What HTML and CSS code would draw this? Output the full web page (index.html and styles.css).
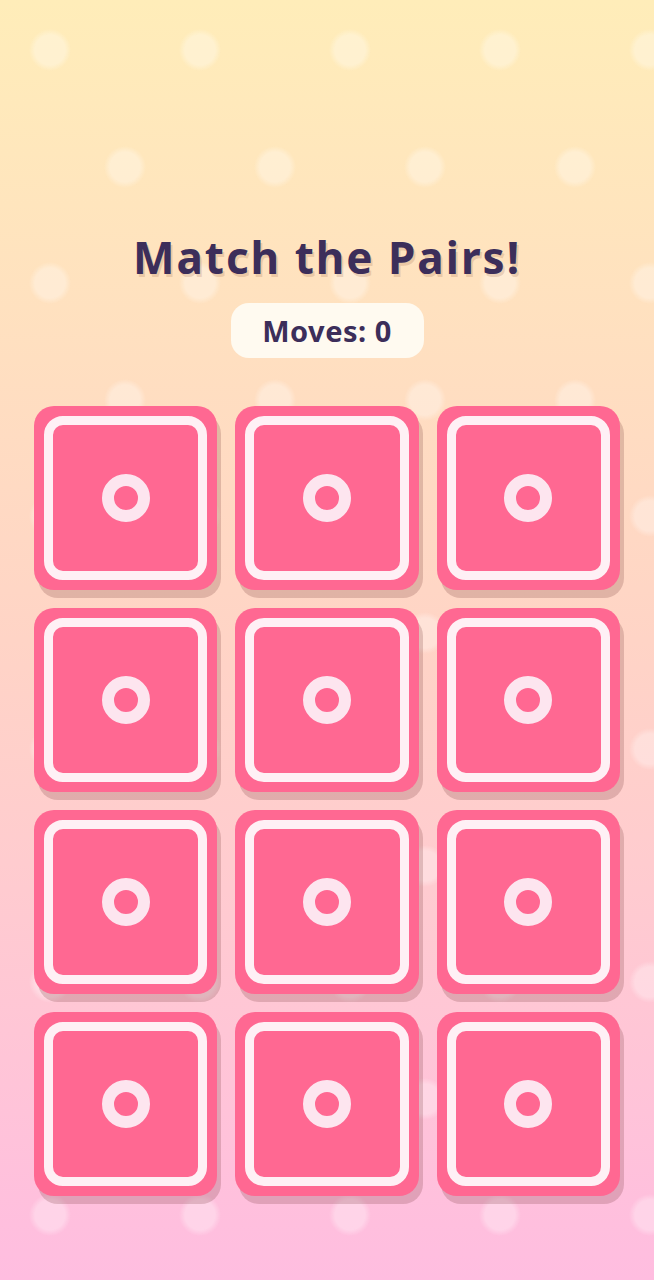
FILE: index.html
```html
<!DOCTYPE html>
<html lang="en">
<head>
  <meta charset="UTF-8">
  <meta name="viewport" content="width=device-width, initial-scale=1.0">
  <title>Match the Pairs!</title>
  <link rel="stylesheet" href="styles.css">
</head>
<body>
  <main class="game">
    <h1 class="title">Match the Pairs!</h1>
    <div class="moves"><span>Moves: <span id="moveCount">0</span></span></div>

    <div class="board" id="board"></div>
  </main>

  <script>
    const board = document.getElementById('board');

    for (let i = 0; i < 12; i++) {
      const card = document.createElement('div');
      card.className = 'card';
      card.innerHTML = '<span class="card-ring"></span>';
      board.appendChild(card);
    }
  </script>
</body>
</html>
```

FILE: styles.css
```css
/* General Styles */
* {
  margin: 0;
  padding: 0;
  box-sizing: border-box;
}

html, body {
  height: 100%;
}

body {
  font-family: 'Noto Sans', 'DejaVu Sans', sans-serif;
  color: #3c2e5a;
  background:
    radial-gradient(circle at 50px 50px, rgba(255, 255, 255, 0.32) 0 15px, rgba(255, 255, 255, 0) 21px),
    radial-gradient(circle at 125px 167px, rgba(255, 255, 255, 0.32) 0 15px, rgba(255, 255, 255, 0) 21px),
    linear-gradient(180deg, #ffedb9 0%, #ffd4c6 50%, #ffbde0 100%);
  background-size: 150px 233px, 150px 233px, 100% 100%;
  background-repeat: repeat, repeat, no-repeat;
}

.game {
  display: flex;
  flex-direction: column;
  align-items: center;
  padding: 232px 34px 0;
}

.title {
  font-size: 44px;
  line-height: 50px;
  font-weight: 700;
  letter-spacing: 2px;
  text-shadow: 2px 3px 0 rgba(150, 90, 60, 0.2);
}

.moves {
  margin-top: 21px;
  height: 55px;
  width: 193px;
  display: flex;
  align-items: center;
  justify-content: center;
  background: #fffaf0;
  border-radius: 18px;
  font-size: 29px;
  font-weight: 700;
  letter-spacing: 0.5px;
}

/* Board */
.board {
  margin-top: 48px;
  width: 100%;
  display: grid;
  grid-template-columns: repeat(3, 1fr);
  gap: 18px 18px;
}

.card {
  position: relative;
  height: 184px;
  background: #ff6892;
  border-radius: 20px;
  box-shadow: 4px 8px 0 rgba(100, 40, 40, 0.2);
  display: flex;
  align-items: center;
  justify-content: center;
}

.card::before {
  content: '';
  position: absolute;
  inset: 10px;
  border: 9px solid #fff0f5;
  border-radius: 19px;
}

.card-ring {
  width: 48px;
  height: 48px;
  border: 12px solid #fde5ef;
  border-radius: 50%;
}
```
